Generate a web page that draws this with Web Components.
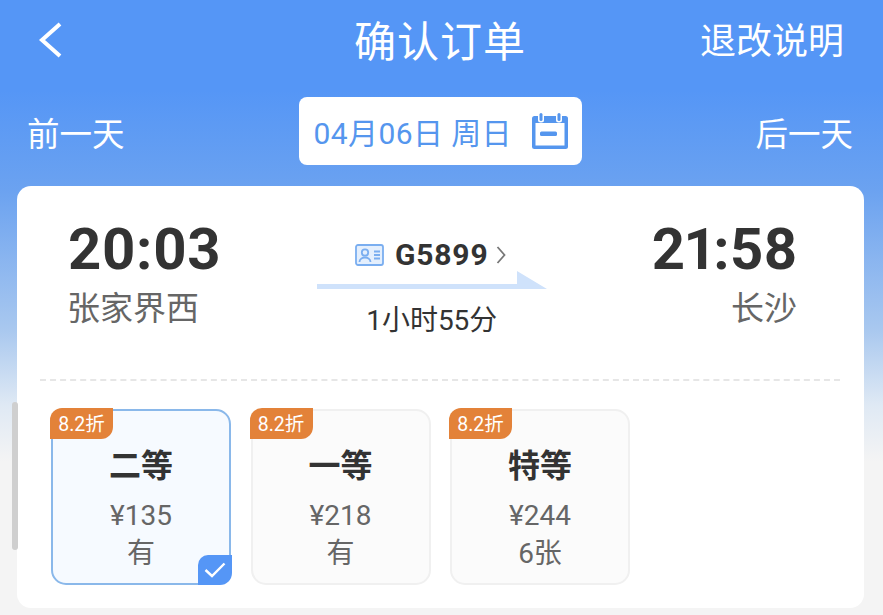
<!DOCTYPE html>
<html lang="zh">
<head>
<meta charset="utf-8">
<title>确认订单</title>
<style>
    html, body { margin: 0; height: 100%; }
    body {
        font-family: Roboto, "Noto Sans CJK SC", sans-serif;
        background: #f4f4f4;
        overflow: hidden;
    }
</style>
</head>
<body>
<order-page>
    <nav-bar title-text="确认订单" action="退改说明"></nav-bar>
    <date-bar date="04月06日 周日"></date-bar>
    <train-card>
        <seat-option slot="seats" name="二等" price="¥135" stock="有" selected></seat-option>
        <seat-option slot="seats" name="一等" price="¥218" stock="有"></seat-option>
        <seat-option slot="seats" name="特等" price="¥244" stock="6张"></seat-option>
    </train-card>
</order-page>

<script>
class OrderPage extends HTMLElement {
    connectedCallback() {
        this.attachShadow({ mode: 'open' });
        this.shadowRoot.innerHTML = `
            <style>
                :host {
                    display: flex;
                    flex-direction: column;
                    position: relative;
                    height: 615px;
                    box-sizing: border-box;
                    padding-bottom: 7px;
                    background: linear-gradient(180deg, #5596f6 0, #5596f6 90px, #6ba2f0 190px, #a9c8ef 330px, #dfe9f4 405px, #f4f4f4 462px);
                }
                .scrollbar {
                    position: absolute;
                    left: 12px;
                    top: 402px;
                    width: 6px;
                    height: 148px;
                    border-radius: 3px;
                    background: #cfcfcf;
                }
            </style>
            <slot></slot>
            <div class="scrollbar"></div>
        `;
    }
}

class NavBar extends HTMLElement {
    connectedCallback() {
        this.attachShadow({ mode: 'open' });
        this.shadowRoot.innerHTML = `
            <style>
                :host {
                    display: grid;
                    grid-template-columns: 1fr auto 1fr;
                    align-items: center;
                    height: 79px;
                    padding: 0 39px 0 37px;
                    color: #fff;
                }
                svg { display: block; margin: -3px 0 0 1px; }
                .title { font-size: 42px; letter-spacing: 1px; line-height: 79px; padding-top: 3px; margin-left: -1px; }
                .action { font-size: 36px; line-height: 79px; padding-top: 3px; justify-self: end; }
            </style>
            <svg width="26" height="36" viewBox="0 0 26 36" fill="none" stroke="#fff" stroke-width="4">
                <path d="M22 2 L4 18 L22 34"/>
            </svg>
            <div class="title">${this.getAttribute('title-text')}</div>
            <div class="action">${this.getAttribute('action')}</div>
        `;
    }
}

class DateBar extends HTMLElement {
    connectedCallback() {
        this.attachShadow({ mode: 'open' });
        this.shadowRoot.innerHTML = `
            <style>
                :host {
                    display: flex;
                    justify-content: space-between;
                    align-items: center;
                    height: 68px;
                    margin: 18px 0 21px;
                    padding: 0 30px 0 27px;
                    color: #fff;
                    font-size: 32.500px;
                }
                .date {
                    display: flex;
                    align-items: center;
                    box-sizing: border-box;
                    width: 283px;
                    height: 68px;
                    padding: 0 14px 0 15px;
                    justify-content: space-between;
                    background: #fff;
                    border-radius: 8px;
                    color: #5596ee;
                    font-size: 30px;
                    letter-spacing: 0.400px;
                }
                svg { display: block; }
            </style>
            <span>前一天</span>
            <div class="date">
                <span>${this.getAttribute('date')}</span>
                <svg width="36" height="36" viewBox="0 0 36 36">
                    <rect x="0" y="3" width="36" height="33" rx="2.500" fill="#5596ee"/>
                    <rect x="3.500" y="10" width="29" height="22.500" fill="#fff"/>
                    <rect x="6" y="0" width="6" height="9.500" rx="2.500" fill="#fff"/>
                    <rect x="24" y="0" width="6" height="9.500" rx="2.500" fill="#fff"/>
                    <rect x="7.500" y="0" width="3" height="8" rx="1.500" fill="#5596ee"/>
                    <rect x="25.500" y="0" width="3" height="8" rx="1.500" fill="#5596ee"/>
                    <rect x="8" y="18.500" width="17" height="4.500" rx="1.500" fill="#5596ee"/>
                </svg>
            </div>
            <span>后一天</span>
        `;
    }
}

class TrainCard extends HTMLElement {
    connectedCallback() {
        this.attachShadow({ mode: 'open' });
        this.shadowRoot.innerHTML = `
            <style>
                :host {
                    display: block;
                    flex: 1;
                    margin: 0 19px 0 17px;
                    padding: 0 24px 0 23px;
                    background: #fff;
                    border-radius: 14px;
                    color: #333;
                }
                .route {
                    display: flex;
                    justify-content: space-between;
                    height: 195px;
                    padding: 0 44px 0 28px;
                    border-bottom: 2px dashed #e6e6e6;
                    box-sizing: border-box;
                }
                .stop { padding-top: 28px; }
                .stop.end { text-align: right; }
                .stop.end .time { margin-right: -2px; }
                .time {
                    font-size: 58px;
                    font-weight: 700;
                    line-height: 70px;
                    letter-spacing: 0.200px;
                    font-variant-numeric: proportional-nums;
                }
                .station { font-size: 33px; line-height: 44px; color: #666; margin: 3px -1px 0; }
                .middle {
                    width: 230px;
                    margin: 50px 0 0 -9px;
                    display: flex;
                    flex-direction: column;
                    align-items: center;
                }
                .train {
                    display: flex;
                    align-items: center;
                    gap: 11px;
                    font-size: 30px;
                    font-weight: 700;
                    letter-spacing: 0.800px;
                    line-height: 38px;
                    margin-left: -2px;
                }
                .train svg { display: block; }
                .train .more { margin-left: -3px; }
                .arrow { display: block; margin-top: -3px; }
                .duration { font-size: 28px; line-height: 40px; margin-top: 10px; }
                .seats { display: flex; gap: 19.500px; padding: 28px 0 0 11px; }
            </style>
            <div class="route">
                <div class="stop">
                    <div class="time">20:03</div>
                    <div class="station">张家界西</div>
                </div>
                <div class="middle">
                    <div class="train">
                        <svg width="29" height="22" viewBox="0 0 29 22" fill="none" stroke="#7aaef0" stroke-width="1.800">
                            <rect x="1" y="1" width="27" height="20" rx="2" fill="#e4effd"/>
                            <circle cx="10" cy="8.500" r="3.200"/>
                            <path d="M4.500 18c0-6 11-6 11 0"/>
                            <path d="M19 7.500h6M19 11h6M19 14.500h6"/>
                        </svg>
                        <span>G5899</span>
                        <svg class="more" width="10" height="20" viewBox="0 0 10 20" fill="none" stroke="#777" stroke-width="1.800">
                            <path d="M1.500 2 L8.500 10 L1.500 18"/>
                        </svg>
                    </div>
                    <svg class="arrow" width="230" height="20" viewBox="0 0 230 20">
                        <path fill="#cfe2fb" d="M0 13h200V0l30 18H0z"/>
                    </svg>
                    <div class="duration">1小时55分</div>
                </div>
                <div class="stop end">
                    <div class="time">21:58</div>
                    <div class="station">长沙</div>
                </div>
            </div>
            <div class="seats"><slot name="seats"></slot></div>
        `;
    }
}

class SeatOption extends HTMLElement {
    connectedCallback() {
        this.attachShadow({ mode: 'open' });
        this.shadowRoot.innerHTML = `
            <style>
                :host {
                    display: block;
                    position: relative;
                    box-sizing: border-box;
                    width: 180px;
                    height: 176px;
                    border: 2px solid #f0f0f0;
                    border-radius: 15px;
                    background: #fbfbfb;
                    text-align: center;
                    padding-top: 32px;
                }
                :host([selected]) { border-color: #8ab8ea; background: #f6faff; }
                .badge {
                    position: absolute;
                    left: -3px;
                    top: -3px;
                    width: 63px;
                    height: 31px;
                    line-height: 33px;
                    background: #e38239;
                    color: #fff;
                    font-size: 19.500px;
                    border-radius: 12px 0 12px 0;
                }
                .name { font-size: 32px; font-weight: 700; line-height: 46px; color: #333; }
                .price, .stock { font-size: 28px; line-height: 38px; color: #666; }
                .price { margin-top: 8px; }
                .check {
                    position: absolute;
                    right: -3px;
                    bottom: -2px;
                    width: 34px;
                    height: 30px;
                    background: #5596f6;
                    border-radius: 10px 0 12px 0;
                    display: flex;
                    align-items: center;
                    justify-content: center;
                }
            </style>
            <div class="badge">8.2折</div>
            <div class="name">${this.getAttribute('name')}</div>
            <div class="price">${this.getAttribute('price')}</div>
            <div class="stock">${this.getAttribute('stock')}</div>
            ${this.hasAttribute('selected') ? `
                <div class="check">
                    <svg width="22" height="16" viewBox="0 0 22 16" fill="none" stroke="#fff" stroke-width="2.400">
                        <path d="M1.500 8 L8 14 L20.500 1.500"/>
                    </svg>
                </div>` : ''}
        `;
    }
}

customElements.define('order-page', OrderPage);
customElements.define('nav-bar', NavBar);
customElements.define('date-bar', DateBar);
customElements.define('train-card', TrainCard);
customElements.define('seat-option', SeatOption);
</script>
</body>
</html>
